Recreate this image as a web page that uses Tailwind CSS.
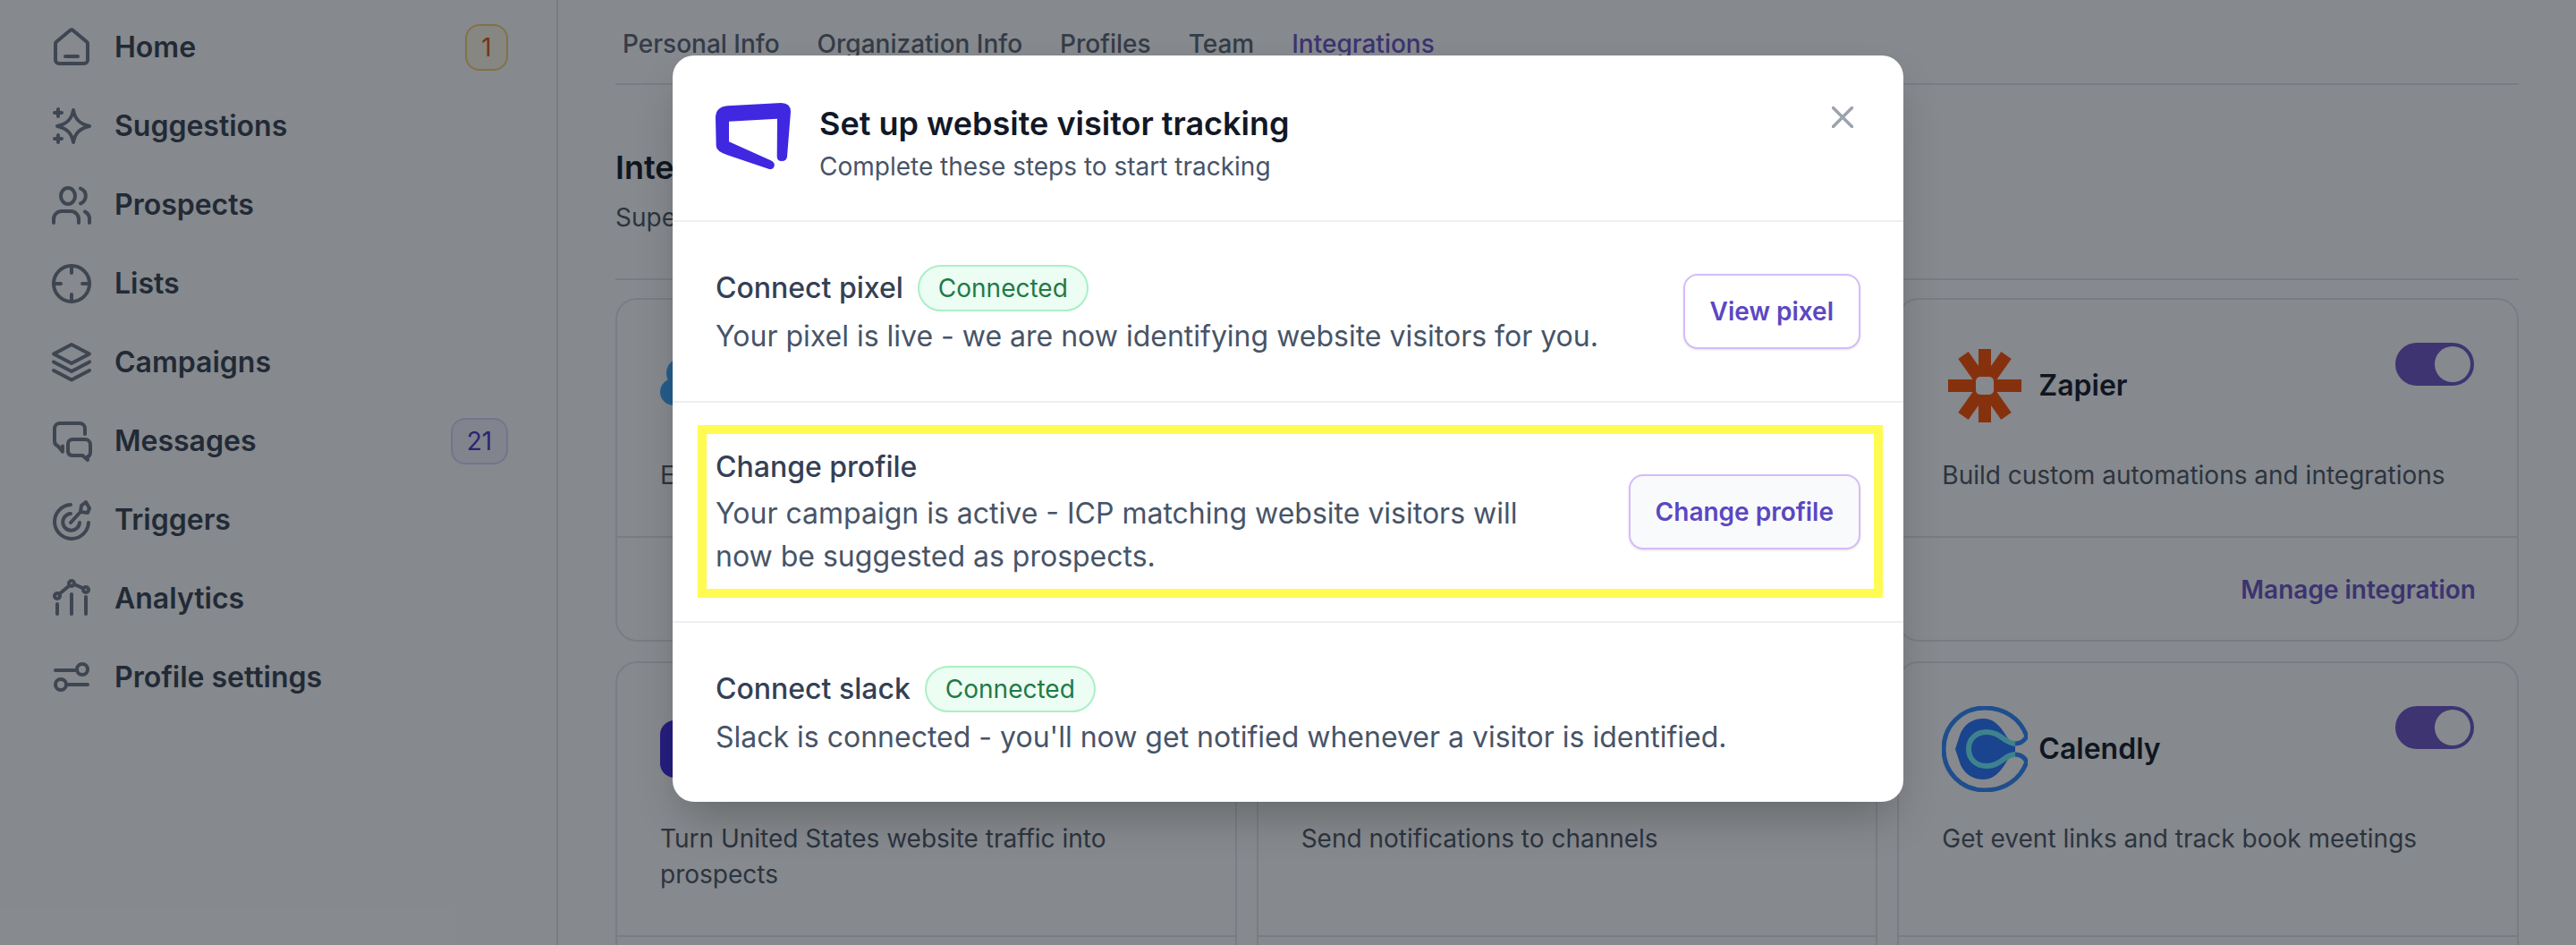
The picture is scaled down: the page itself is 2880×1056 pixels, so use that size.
<!DOCTYPE html>
<html lang="en">
<head>
  <meta charset="UTF-8" />
  <title>Integrations</title>
  <script src="https://cdn.jsdelivr.net/npm/@tailwindcss/browser@4"></script>
</head>
<body class="bg-white font-['Inter',sans-serif]">
<div class="relative flex h-screen overflow-hidden">

  <!-- Sidebar -->
  <aside class="w-[624px] shrink-0 border-r-2 border-[#e5e7eb] pt-[9px] pl-14 pr-[54px] text-[32px] font-semibold text-[#374151]">
    <a class="flex h-[88px] items-center gap-6">
      <svg class="size-12 text-[#6f7889]" viewBox="0 0 24 24" fill="none" stroke="currentColor" stroke-width="2" stroke-linecap="round" stroke-linejoin="round"><path d="M11 2.6a1.5 1.5 0 0 1 2 0l7.2 6A2 2 0 0 1 21 10.200v8.800a2 2 0 0 1-2 2H5a2 2 0 0 1-2-2v-8.800a2 2 0 0 1 .8-1.600z"/><path d="M8.500 17h7"/></svg>
      <span class="flex-1">Home</span>
      <span class="flex h-[52px] w-12 items-center justify-center rounded-2xl border-2 border-[#f8cf70] bg-[#fffaeb] text-[28px] font-normal text-[#d9560f]">1</span>
    </a>
    <a class="flex h-[88px] items-center gap-6">
      <svg class="size-12 text-[#6f7889]" viewBox="0 0 24 24" fill="none" stroke="currentColor" stroke-width="2" stroke-linecap="round" stroke-linejoin="round"><path d="M13 3c.8 4.800 3.200 7.700 9 9-5.800 1.300-8.200 4.200-9 9-.8-4.800-3.200-7.700-9-9 5.800-1.300 8.200-4.200 9-9z"/><path d="M4.500 2.500v4M2.500 4.500h4M4.500 17v4M2.500 19h4"/></svg>
      <span>Suggestions</span>
    </a>
    <a class="flex h-[88px] items-center gap-6">
      <svg class="size-12 text-[#6f7889]" viewBox="0 0 24 24" fill="none" stroke="currentColor" stroke-width="2" stroke-linecap="round" stroke-linejoin="round"><ellipse cx="10" cy="7" rx="4" ry="4.500"/><path d="M17 2.800a4.500 4.500 0 0 1 0 8.400"/><path d="M2 22v-2a4.500 4.500 0 0 1 4.500-4.500h5a4.500 4.500 0 0 1 4.500 4.500v2"/><path d="M19.500 15.800a4.500 4.500 0 0 1 2.500 4.200v2"/></svg>
      <span>Prospects</span>
    </a>
    <a class="flex h-[88px] items-center gap-6">
      <svg class="size-12 text-[#6f7889]" viewBox="0 0 24 24" fill="none" stroke="currentColor" stroke-width="2" stroke-linecap="round" stroke-linejoin="round"><circle cx="12" cy="12" r="10"/><path d="M12 2v4M12 18v4M2 12h4M18 12h4"/></svg>
      <span>Lists</span>
    </a>
    <a class="flex h-[88px] items-center gap-6">
      <svg class="size-12 text-[#6f7889]" viewBox="0 0 24 24" fill="none" stroke="currentColor" stroke-width="2" stroke-linecap="round" stroke-linejoin="round"><path d="M12 2l10 5.200-10 5.300L2 7.200z"/><path d="M2 11.700l10 5.300 10-5.300"/><path d="M2 16.500l10 5.300 10-5.300"/></svg>
      <span>Campaigns</span>
    </a>
    <a class="flex h-[88px] items-center gap-6">
      <svg class="size-12 text-[#6f7889]" viewBox="0 0 24 24" fill="none" stroke="currentColor" stroke-width="2" stroke-linecap="round" stroke-linejoin="round"><path d="M19.500 8V5a3 3 0 0 0-3-3h-11a3 3 0 0 0-3 3v7a3 3 0 0 0 2 2.800l2.500 3v-3"/><path d="M12.500 11h7a3 3 0 0 1 3 3v4.500a2.500 2.500 0 0 1-1.500 2.200v1.800l-2.800-2.500h-5.700A2.500 2.500 0 0 1 10 18v-4.500a2.500 2.500 0 0 1 2.500-2.500z"/></svg>
      <span class="flex-1">Messages</span>
      <span class="flex h-[52px] w-16 items-center justify-center rounded-2xl border-2 border-[#d9d6fe] bg-[#f4f3ff] text-[28px] font-normal text-[#4a34c9]">21</span>
    </a>
    <a class="flex h-[88px] items-center gap-6">
      <svg class="size-12 text-[#6f7889]" viewBox="0 0 24 24" fill="none" stroke="currentColor" stroke-width="2" stroke-linecap="round" stroke-linejoin="round"><path d="M11.500 3.500a9.500 9.500 0 1 0 10 10"/><path d="M11.500 8.500a4.700 4.700 0 1 0 5 5"/><path d="M11.500 13.500l5.500-6"/><path d="M17 7.500l.5-3.500 2.500-2 2 3.500-1 2.500z"/></svg>
      <span>Triggers</span>
    </a>
    <a class="flex h-[88px] items-center gap-6">
      <svg class="size-12 text-[#6f7889]" viewBox="0 0 24 24" fill="none" stroke="currentColor" stroke-width="2" stroke-linecap="round" stroke-linejoin="round"><circle cx="12" cy="3.500" r="1.500"/><circle cx="4" cy="10.500" r="1.500"/><circle cx="20" cy="7" r="1.500"/><path d="M5 9.500l6-5M13.500 4l5 2.200"/><path d="M4 15v5.500M12 9.500v11M20 11v9.500"/></svg>
      <span>Analytics</span>
    </a>
    <a class="flex h-[88px] items-center gap-6">
      <svg class="size-12 text-[#6f7889]" viewBox="0 0 24 24" fill="none" stroke="currentColor" stroke-width="2" stroke-linecap="round" stroke-linejoin="round"><circle cx="18" cy="7.500" r="3"/><circle cx="6" cy="16" r="3"/><path d="M3 8h12M9 16h12"/></svg>
      <span>Profile settings</span>
    </a>
  </aside>

  <!-- Main -->
  <main class="flex-1 px-16 pt-[29px]">
    <nav class="flex gap-[42px] border-b-2 border-[#e5e7eb] px-2 pb-6 text-[28px] leading-10 font-medium text-[#5b6472]">
      <a>Personal Info</a>
      <a>Organization Info</a>
      <a>Profiles</a>
      <a>Team</a>
      <a class="text-[#6a53c4]">Integrations</a>
    </nav>
    <div class="border-b-2 border-[#e5e7eb] pt-16 pb-12">
      <h2 class="text-[36px] leading-14 font-semibold text-[#111827]">Integrations</h2>
      <p class="mt-2 text-[28px] leading-10 text-[#4b5563]">Supercharge your workflow</p>
    </div>

    <div class="mt-5 grid grid-cols-3 gap-x-[22px] gap-y-[22px]">
      <section class="rounded-3xl border-2 border-[#e5e7eb]">
        <div class="p-12">
          <div class="flex h-24 items-center gap-3">
            <svg class="size-24" viewBox="0 0 96 96"><g fill="#3aa6fa"><circle cx="15" cy="55" r="15"/><circle cx="24" cy="34" r="17"/><circle cx="48" cy="32" r="15"/><circle cx="68" cy="40" r="17"/><circle cx="40" cy="60" r="16"/><circle cx="66" cy="58" r="13"/></g></svg>
          </div>
          <p class="mt-8 text-[28px] leading-10 text-[#4b5563]">Export prospects to your CRM</p>
        </div>
        <div class="h-[116px] border-t-2 border-[#e5e7eb]"></div>
      </section>
      <section class="rounded-3xl border-2 border-[#e5e7eb]">
        <div class="h-[264px]"></div>
        <div class="h-[116px] border-t-2 border-[#e5e7eb]"></div>
      </section>
      <section class="rounded-3xl border-2 border-[#e5e7eb]">
        <div class="p-12">
          <div class="flex items-start justify-between">
            <div class="flex h-24 items-center gap-3">
              <svg class="size-24" viewBox="0 0 96 96" fill="none" stroke="#ff4f00" stroke-width="14"><path d="M48 7v82M7 48h82M24 14l48 68M72 14L24 82"/><rect x="38" y="38" width="20" height="20" rx="5" fill="#fff" stroke="none"/></svg>
              <span class="text-[32px] font-semibold text-[#111827]">Zapier</span>
            </div>
            <span class="flex h-12 w-[88px] items-center justify-end rounded-full bg-[#6f55c8] pr-1"><span class="size-10 rounded-full bg-white"></span></span>
          </div>
          <p class="mt-8 text-[28px] leading-10 text-[#4b5563]">Build custom automations and integrations</p>
        </div>
        <div class="flex h-[116px] items-center justify-end border-t-2 border-[#e5e7eb] pr-[46px] pt-[2px] text-[28px] font-semibold text-[#6a53c4]">Manage integration</div>
      </section>

      <section class="rounded-3xl border-2 border-[#e5e7eb]">
        <div class="p-12">
          <div class="flex h-24 items-center">
            <div class="size-16 rounded-2xl bg-[#3f28e0]"></div>
          </div>
          <p class="mt-8 text-[28px] leading-10 text-[#4b5563]">Turn United States website traffic into prospects</p>
        </div>
        <div class="h-[116px] border-t-2 border-[#e5e7eb]"></div>
      </section>
      <section class="rounded-3xl border-2 border-[#e5e7eb]">
        <div class="p-12">
          <div class="h-24"></div>
          <p class="mt-8 text-[28px] leading-10 text-[#4b5563]">Send notifications to channels</p>
          <div class="h-10"></div>
        </div>
        <div class="h-[116px] border-t-2 border-[#e5e7eb]"></div>
      </section>
      <section class="rounded-3xl border-2 border-[#e5e7eb]">
        <div class="p-12">
          <div class="flex items-start justify-between">
            <div class="flex h-24 items-center gap-3">
              <svg class="size-24" viewBox="0 0 96 96" fill="none">
                <path d="M47 14C34 14 26 20 21 30L15 48L21 66C26 76 34 82 47 82C60 82 68 70 76 56L82 53V42L76 40C68 26 60 14 47 14z" fill="#2674ff"/>
                <path d="M82 42C70 42 66 29 50 29C38 29 30 37 30 48C30 59 38 67 50 67C66 67 70 54 82 54" stroke="#6ef0ff" stroke-width="6"/>
                <path d="M82 42C88 42 92 39 95 34C88 14 70 2 48 2C22 2 2 22 2 48C2 74 22 94 48 94C70 94 88 82 95 62C92 57 88 54 82 54" stroke="#2e88ff" stroke-width="5"/>
              </svg>
              <span class="text-[32px] font-semibold text-[#111827]">Calendly</span>
            </div>
            <span class="flex h-12 w-[88px] items-center justify-end rounded-full bg-[#6f55c8] pr-1"><span class="size-10 rounded-full bg-white"></span></span>
          </div>
          <p class="mt-8 text-[28px] leading-10 text-[#4b5563]">Get event links and track book meetings</p>
          <div class="h-10"></div>
        </div>
        <div class="h-[116px] border-t-2 border-[#e5e7eb]"></div>
      </section>
    </div>
  </main>

  <!-- Modal overlay -->
  <div class="absolute inset-0 flex items-start justify-center bg-[#0e141c]/50 pt-[62px]">
    <div class="relative w-[1376px] rounded-3xl bg-white shadow-2xl">
      <header class="relative flex items-start gap-8 border-b-2 border-[#eeeef4] px-12 pt-12 pb-10">
        <svg class="mt-[5px] h-[74px] w-[84px] shrink-0" viewBox="0 0 84 74"><path fill="#3f28e0" d="M13.300 3.300L73.300 0Q84 0 84 10L80 60Q79.500 65 74 65Q68.700 65 68.700 60L69 17.700L15 20.700V43.300L61.700 64.300Q66.500 66.500 65.700 70.500Q64.500 74.800 60 74L13.300 58.300Q0.700 54 0.700 48L0 16.700Q0 4.500 13.300 3.300z"/></svg>
        <div>
          <h3 class="text-[36px] leading-14 font-semibold text-[#111827]">Set up website visitor tracking</h3>
          <p class="text-[28px] leading-10 text-[#475467]">Complete these steps to start tracking</p>
        </div>
        <button class="absolute top-[57px] right-[56px] text-[#9ca3af]">
          <svg class="size-6 block" viewBox="0 0 24 24" fill="none" stroke="currentColor" stroke-width="3.500" stroke-linecap="round"><path d="M1.500 1.500l21 21M22.500 1.500l-21 21"/></svg>
        </button>
      </header>

      <div class="flex items-center justify-between border-b-2 border-[#eeeef4] px-12 py-12">
        <div>
          <div class="flex h-[52px] items-center gap-4">
            <span class="text-[32px] font-medium text-[#344054]">Connect pixel</span>
            <span class="rounded-full border-2 border-[#abefc6] bg-[#ecfdf3] px-[21px] py-[4px] text-[28px] leading-10 text-[#1f7a46]">Connected</span>
          </div>
          <p class="mt-1 text-[32px] leading-12 text-[#475467]">Your pixel is live - we are now identifying website visitors for you.</p>
        </div>
        <button class="rounded-2xl border-2 border-[#d6bbfb] bg-white px-7 py-5 text-[28px] leading-10 font-semibold text-[#5b47c2] shadow-sm">View pixel</button>
      </div>

      <div class="flex items-center justify-between border-b-2 border-[#eeeef4] px-12 py-12">
        <div class="w-[960px]">
          <div class="text-[32px] leading-12 font-medium text-[#344054]">Change profile</div>
          <p class="mt-1 text-[32px] leading-12 text-[#475467]">Your campaign is active - ICP matching website visitors will now be suggested as prospects.</p>
        </div>
        <button class="rounded-2xl border-2 border-[#d6bbfb] bg-[#f9fafb] px-7 py-5 text-[28px] leading-10 font-semibold text-[#5b47c2] shadow-sm">Change profile</button>
      </div>

      <div class="px-12 py-12">
        <div class="flex h-[52px] items-center gap-4">
          <span class="text-[32px] font-medium text-[#344054]">Connect slack</span>
          <span class="rounded-full border-2 border-[#abefc6] bg-[#ecfdf3] px-[21px] py-[4px] text-[28px] leading-10 text-[#1f7a46]">Connected</span>
        </div>
        <p class="mt-1 text-[32px] leading-12 text-[#475467]">Slack is connected - you'll now get notified whenever a visitor is identified.</p>
      </div>

      <!-- annotation box round the highlighted step -->
      <div class="pointer-events-none absolute top-[413px] left-[28px] h-[193px] w-[1325px] border-[10px] border-[#fffb52]"></div>
    </div>
  </div>
</div>
</body>
</html>
